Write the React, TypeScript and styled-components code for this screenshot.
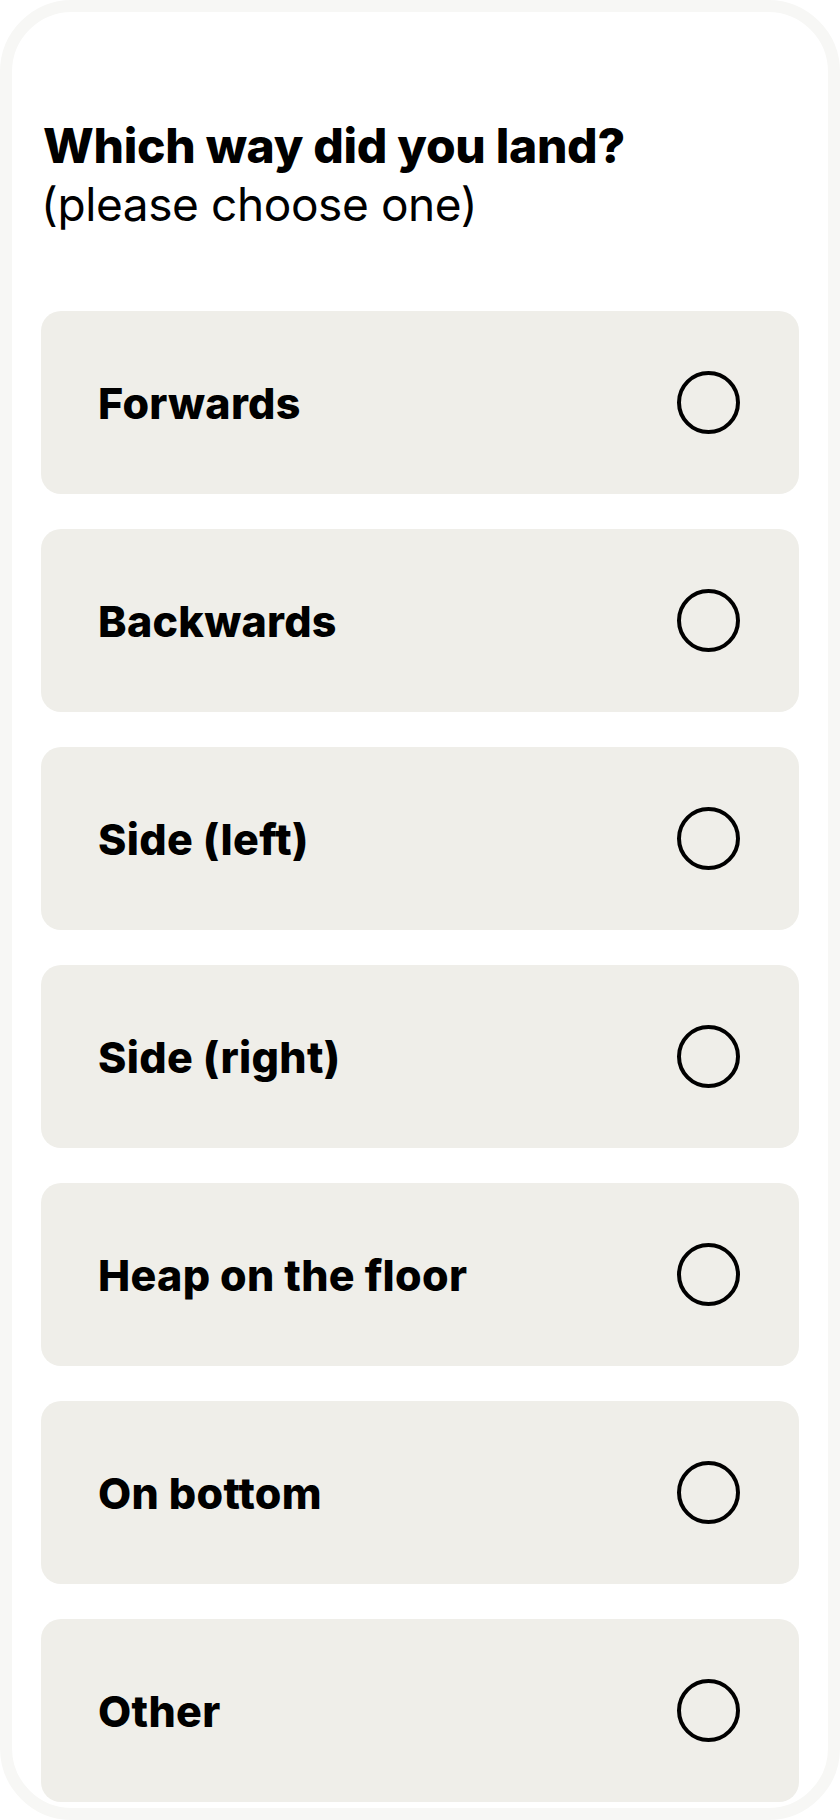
import styled, { createGlobalStyle } from 'styled-components'

const GlobalStyle = createGlobalStyle`
  html, body {
    margin: 0;
    padding: 0;
    background: #ffffff;
  }
  body {
    font-family: Inter, "Noto Sans", sans-serif;
    color: #000000;
  }
`

const options = [
  'Forwards',
  'Backwards',
  'Side (left)',
  'Side (right)',
  'Heap on the floor',
  'On bottom',
  'Other',
]

// phone-ish frame with the light grey rim
const Frame = styled.div`
  box-sizing: border-box;
  width: 840px;
  height: 1820px;
  border: 12px solid #f7f7f5;
  border-radius: 72px;
  background: #ffffff;
  overflow: hidden;
  padding: 104px 29px 0 29px;
`

const Title = styled.h1`
  margin: 0;
  font-size: 48px;
  line-height: 59px;
  font-weight: 800;
  letter-spacing: -0.3px;
  padding-left: 2px;
`

const Subtitle = styled.p`
  margin: 0;
  font-size: 46px;
  line-height: 59px;
  font-weight: 400;
  letter-spacing: -0.4px;
`

const OptionList = styled.div`
  display: flex;
  flex-direction: column;
  gap: 35px;
  margin-top: 77px;
`

const OptionCard = styled.label`
  box-sizing: border-box;
  height: 183px;
  display: flex;
  align-items: center;
  justify-content: space-between;
  padding: 0 59px 0 57px;
  background: #efeee9;
  border-radius: 20px;
  cursor: pointer;
`

const OptionText = styled.span`
  font-size: 43px;
  font-weight: 800;
  letter-spacing: 0.3px;
`

const Radio = styled.span`
  box-sizing: border-box;
  width: 63px;
  height: 63px;
  border: 4px solid #000000;
  border-radius: 50%;
  flex-shrink: 0;
`

const App = () => {
  return (
    <>
      <GlobalStyle />
      <Frame>
        <Title>Which way did you land?</Title>
        <Subtitle>(please choose one)</Subtitle>
        <OptionList>
          {options.map((opt) => (
            <OptionCard key={opt}>
              <OptionText>{opt}</OptionText>
              <Radio />
            </OptionCard>
          ))}
        </OptionList>
      </Frame>
    </>
  )
}

export default App
